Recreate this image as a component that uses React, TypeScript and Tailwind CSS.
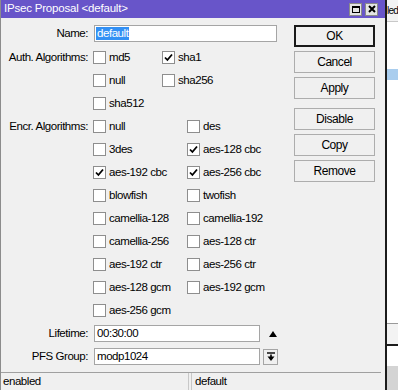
import React from 'react';

// IPsec proposal dialog (WinBox style)

type Item = { label: string; checked?: boolean };

const authRows: Item[][] = [
    [{ label: 'md5' }, { label: 'sha1', checked: true }],
    [{ label: 'null' }, { label: 'sha256' }],
    [{ label: 'sha512' }],
];

const encrRows: Item[][] = [
    [{ label: 'null' }, { label: 'des' }],
    [{ label: '3des' }, { label: 'aes-128 cbc', checked: true }],
    [{ label: 'aes-192 cbc', checked: true }, { label: 'aes-256 cbc', checked: true }],
    [{ label: 'blowfish' }, { label: 'twofish' }],
    [{ label: 'camellia-128' }, { label: 'camellia-192' }],
    [{ label: 'camellia-256' }, { label: 'aes-128 ctr' }],
    [{ label: 'aes-192 ctr' }, { label: 'aes-256 ctr' }],
    [{ label: 'aes-128 gcm' }, { label: 'aes-192 gcm' }],
    [{ label: 'aes-256 gcm' }],
];

const Check: React.FC<{ item: Item; width?: string }> = ({ item, width }) => (
    <div className={`flex items-center gap-[3px] ${width ?? ''}`}>
        <div className="w-[13px] h-[13px] bg-white border border-[#8e8e8e] flex items-center justify-center">
            {item.checked && (
                <svg width="9" height="9" viewBox="0 0 9 9">
                    <path d="M1 4.5 L3.4 7 L8 1.5" stroke="#000" strokeWidth="1.8" fill="none" />
                </svg>
            )}
        </div>
        <span>{item.label}</span>
    </div>
);

const Row: React.FC<{ label?: string; children: React.ReactNode }> = ({ label, children }) => (
    <div className="flex items-center h-[23px]">
        <div className="w-[87px] text-right shrink-0">{label}</div>
        <div className="ml-[5px] flex items-center">{children}</div>
    </div>
);

const Btn: React.FC<{ label: string; main?: boolean; className?: string }> = ({ label, main, className }) => (
    <div
        className={`h-[22px] flex items-center justify-center bg-[#f0f0f0] text-[12px] ${
            main ? 'border-2 border-[#1a1a1a]' : 'border border-[#adadad]'
        } ${className ?? ''}`}
    >
        {label}
    </div>
);

export default function App() {
    return (
        <div
            className="flex w-[398px] h-[390px] overflow-hidden bg-white text-black text-[11.5px] tracking-[-0.45px]"
            style={{ fontFamily: '"Liberation Sans", Arial, sans-serif' }}
        >
            {/* dialog window */}
            <div className="w-[385px] shrink-0 flex flex-col bg-[#f0f0f0] border-l border-[#8c8c8c]">
                <div className="h-[18px] bg-[#6855c9] flex items-center justify-between pl-[3px] pr-[7px]">
                    <span className="text-white text-[11.5px] tracking-[-0.2px]">IPsec Proposal &lt;default&gt;</span>
                    <div className="flex gap-[3px]">
                        <div className="w-[13px] h-[13px] bg-[#e4e4e4] border border-[#8a8a8a] flex items-center justify-center">
                            <div className="w-[8px] h-[7px] border border-black border-t-2" />
                        </div>
                        <div className="w-[13px] h-[13px] bg-[#e4e4e4] border border-[#8a8a8a] flex items-center justify-center">
                            <svg width="8" height="8" viewBox="0 0 8 8">
                                <path d="M1 1 L7 7 M7 1 L1 7" stroke="#000" strokeWidth="2" />
                            </svg>
                        </div>
                    </div>
                </div>

                <div className="h-[354px] flex">
                    <div className="w-[293px] pt-[7px]">
                        <div className="flex items-center h-[17px] mb-[4px]">
                            <div className="w-[87px] text-right">Name:</div>
                            <div className="ml-[6px] w-[183px] h-[17px] bg-white border border-[#a5a5a5] flex items-center px-[1px]">
                                <span className="bg-[#3390f4] text-white px-[1px] leading-[13px]">default</span>
                            </div>
                        </div>

                        {authRows.map((r, i) => (
                            <Row key={`a${i}`} label={i === 0 ? 'Auth. Algorithms:' : undefined}>
                                <Check item={r[0]} width="w-[69px]" />
                                {r[1] && <Check item={r[1]} />}
                            </Row>
                        ))}

                        {encrRows.map((r, i) => (
                            <Row key={`e${i}`} label={i === 0 ? 'Encr. Algorithms:' : undefined}>
                                <Check item={r[0]} width="w-[94px]" />
                                {r[1] && <Check item={r[1]} />}
                            </Row>
                        ))}

                        <div className="flex items-center h-[23px]">
                            <div className="w-[87px] text-right">Lifetime:</div>
                            <div className="ml-[6px] w-[166px] h-[17px] bg-white border border-[#a5a5a5] flex items-center px-[2px]">
                                00:30:00
                            </div>
                            <svg className="ml-[9px]" width="8" height="6" viewBox="0 0 8 6">
                                <path d="M4 0 L8 6 L0 6 Z" fill="#000" />
                            </svg>
                        </div>
                        <div className="flex items-center h-[23px]">
                            <div className="w-[87px] text-right">PFS Group:</div>
                            <div className="ml-[6px] w-[166px] h-[17px] bg-white border border-[#a5a5a5] flex items-center px-[2px]">
                                modp1024
                            </div>
                            <div className="ml-[3px] w-[15px] h-[16px] bg-[#f0f0f0] border border-[#a5a5a5] flex items-center justify-center">
                                <svg width="8" height="9" viewBox="0 0 8 9">
                                    <path d="M0 1 H8" stroke="#000" strokeWidth="1.4" />
                                    <path d="M4 2.5 V5" stroke="#000" strokeWidth="1.6" />
                                    <path d="M0.5 4.5 L7.5 4.5 L4 9 Z" fill="#000" />
                                </svg>
                            </div>
                        </div>
                    </div>

                    <div className="w-[81px] pt-[7px] flex flex-col gap-[4px]">
                        <Btn label="OK" main />
                        <Btn label="Cancel" />
                        <Btn label="Apply" />
                        <Btn label="Disable" className="mt-[5px]" />
                        <Btn label="Copy" />
                        <Btn label="Remove" />
                    </div>
                </div>

                <div className="h-[18px] flex border-t border-[#a0a0a0] mr-[4px]">
                    <div className="w-[188px] flex items-center pl-[2px] border-r border-[#c8c8c8]">enabled</div>
                    <div className="flex-1 flex items-center pl-[3px] border-l border-[#c8c8c8] ml-[2px]">default</div>
                </div>
            </div>

            {/* window behind */}
            <div className="w-[2px] shrink-0 bg-[#1c1c1c]" />
            <div className="flex-1 flex flex-col overflow-hidden">
                <div className="h-[22px] bg-[#f3f3f3] border-b border-[#c8c8c8] flex items-center whitespace-nowrap text-[10px] tracking-[-0.8px]">
                    led
                </div>
                <div className="h-[47px] bg-white" />
                <div className="h-[11px] bg-[#a9cdee]" />
                <div className="h-[244px] bg-white border-b border-[#9a9a9a]" />
                <div className="h-[22px] bg-[#f3f3f3] border-b-2 border-[#1c1c1c]" />
                <div className="h-[20px] bg-white" />
                <div className="flex-1 bg-[#d4d4d4]" />
            </div>
        </div>
    );
}
